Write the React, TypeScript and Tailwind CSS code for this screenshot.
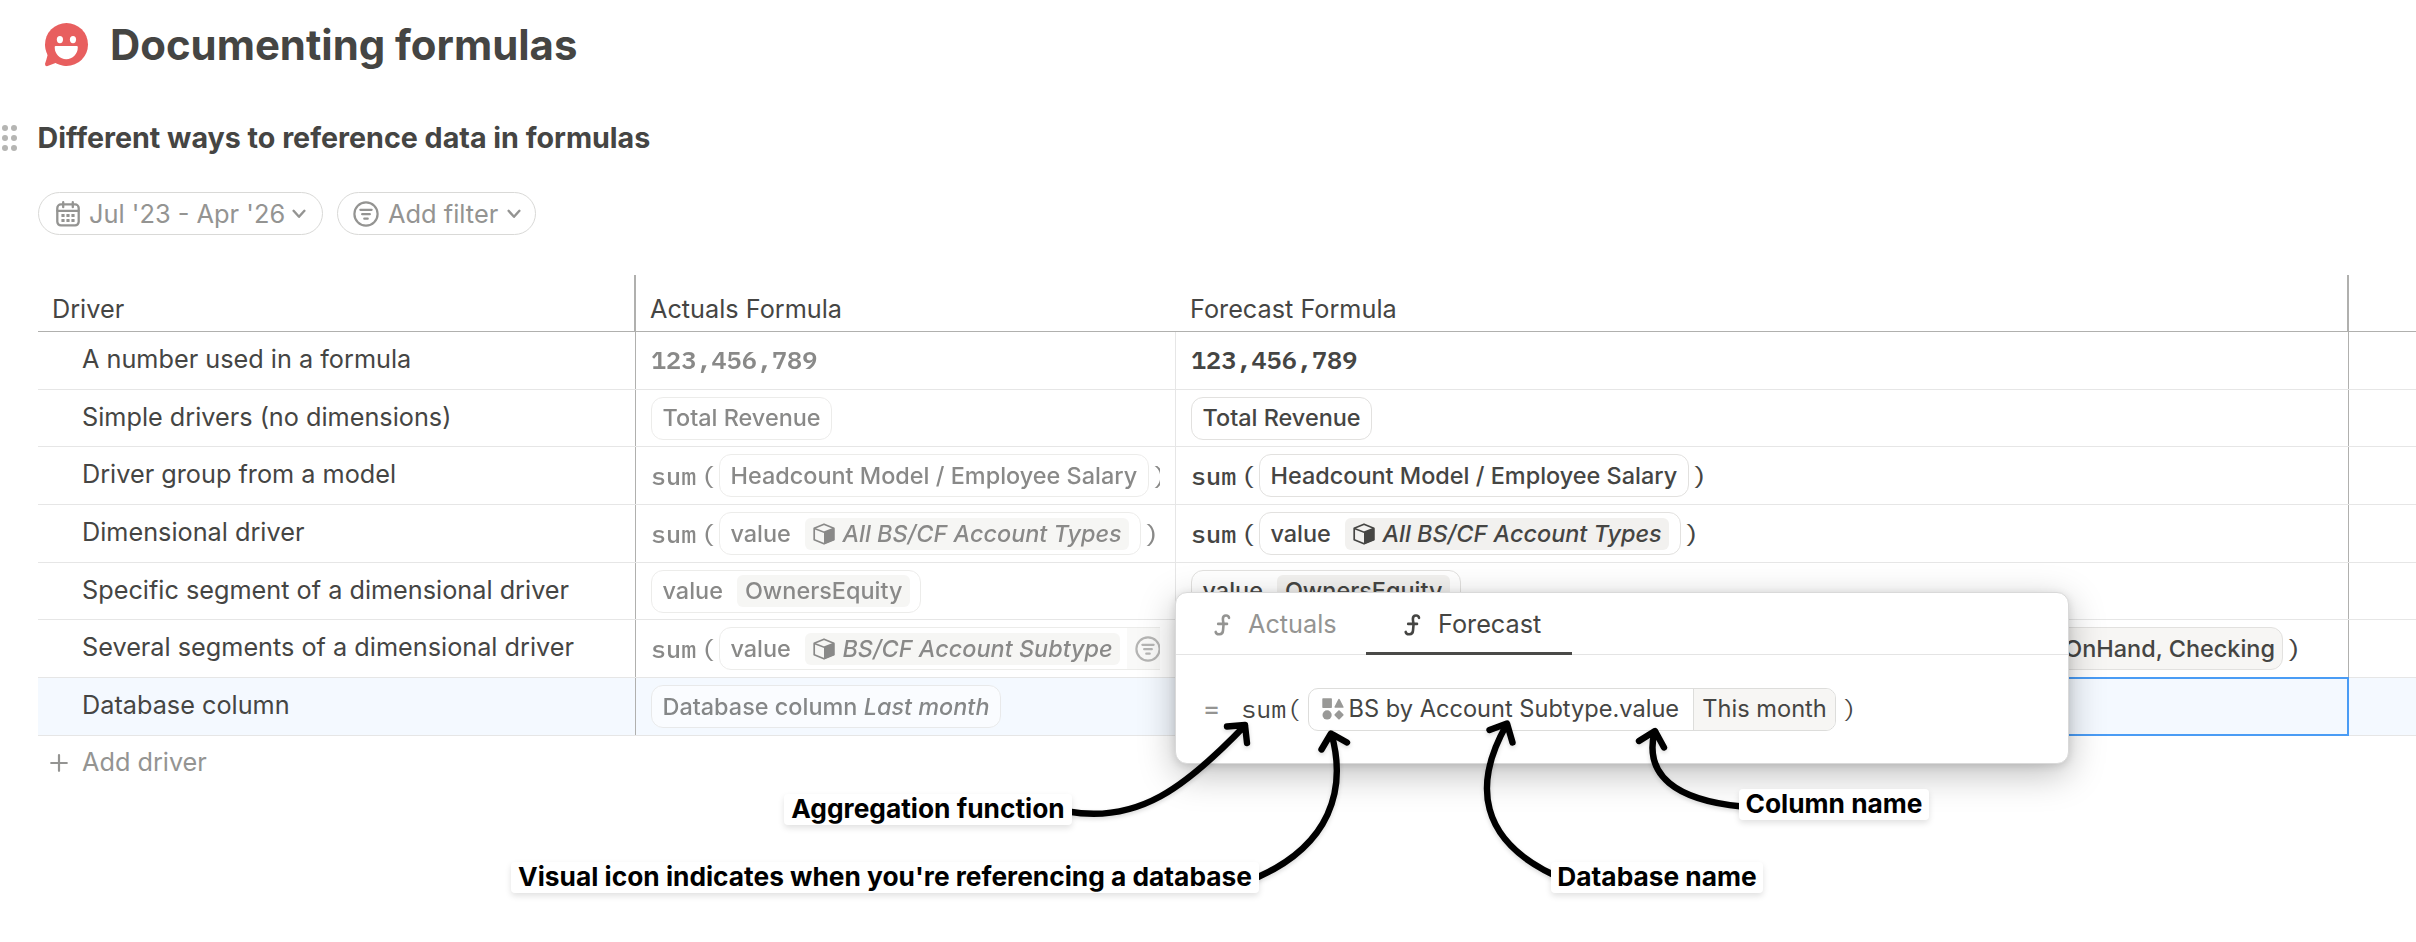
import type { ReactNode } from "react";

const MONO = "font-['IBM_Plex_Mono','Liberation_Mono',monospace] text-[25.2px]";

function ChatSmile() {
  return (
    <svg width="44" height="44" viewBox="0 0 44 44" className="shrink-0">
      <circle cx="21.5" cy="21.5" r="21.5" fill="#e85f5f" />
      <path d="M0 21 L2.6 32 Q1.4 37 0.1 40.6 Q-0.3 43.6 2.6 43.1 L10.5 40 L21 43 L21 21 Z" fill="#e85f5f" />
      <ellipse cx="14.9" cy="16.6" rx="3.1" ry="3.6" fill="#fff" />
      <ellipse cx="28" cy="16.6" rx="3.1" ry="3.6" fill="#fff" />
      <path d="M10.8 22.9 H31.6 Q33 22.9 32.8 24.3 A11.3 11.6 0 0 1 9.7 24.3 Q9.5 22.9 10.8 22.9 Z" fill="#fff" />
    </svg>
  );
}

function Calendar() {
  return (
    <svg width="24" height="26" viewBox="0 0 24 26" fill="none" stroke="currentColor" strokeWidth="2.3" strokeLinecap="round">
      <rect x="1.3" y="3.4" width="21.4" height="21" rx="3.6" />
      <path d="M1.3 9.8H22.7M7.2 1.2V6.2M16.8 1.2V6.2" />
      <g fill="currentColor" stroke="none">
        <rect x="5.4" y="12.9" width="3.2" height="3.2" rx=".6" />
        <rect x="10.4" y="12.9" width="3.2" height="3.2" rx=".6" />
        <rect x="15.4" y="12.9" width="3.2" height="3.2" rx=".6" />
        <rect x="5.4" y="17.9" width="3.2" height="3.2" rx=".6" />
        <rect x="10.4" y="17.9" width="3.2" height="3.2" rx=".6" />
        <rect x="15.4" y="17.9" width="3.2" height="3.2" rx=".6" />
      </g>
    </svg>
  );
}

function FilterCircle({ className = "" }: { className?: string }) {
  return (
    <svg width="26" height="26" viewBox="0 0 26 26" fill="none" stroke="currentColor" strokeWidth="2.2" strokeLinecap="round" className={`shrink-0 ${className}`}>
      <circle cx="13" cy="13" r="11.6" />
      <path d="M7.4 8.8H18.6M9.2 13.2H16.8M11.3 17.7H14.7" strokeWidth="2.3" />
    </svg>
  );
}

function Chevron() {
  return (
    <svg width="14" height="10" viewBox="0 0 14 10" fill="none" stroke="currentColor" strokeWidth="2.4" strokeLinecap="round" strokeLinejoin="round">
      <path d="M1.6 1.8 L7 7.8 L12.4 1.8" />
    </svg>
  );
}

function Cube() {
  return (
    <svg width="22" height="22" viewBox="0 0 22 22" className="shrink-0">
      <path d="M11 1.2 L20.8 5.2 V16.8 L11 20.8 L1.2 16.8 V5.2 Z" fill="none" stroke="currentColor" strokeWidth="1.7" strokeLinejoin="round" />
      <path d="M1.4 5.4 L11 9.2 L20.6 5.4" fill="none" stroke="currentColor" strokeWidth="1.6" />
      <path d="M11 9.2 L21.3 5.3 V17 L11 21.2 Z" fill="currentColor" />
    </svg>
  );
}

function FunctionIcon() {
  return (
    <svg width="17" height="22" viewBox="0 0 17 22" fill="none" stroke="currentColor" strokeWidth="2.6" strokeLinecap="round">
      <path d="M15 3.9 C14.6 .6 9 .4 8.9 4.6 C8.8 7 9.6 8.4 9.5 11 L9 16.6 C8.7 21.4 2.4 21.2 1.7 17.9 M4.2 9.9 H13" />
    </svg>
  );
}

function Shapes() {
  return (
    <svg width="22" height="22" viewBox="0 0 22 22" fill="#999997" stroke="#999997" strokeLinejoin="round" className="shrink-0">
      <rect x="1" y="1" width="8.2" height="8.2" strokeWidth="1.4" />
      <path d="M17 1.6 L20.8 9 H13.2 Z" strokeWidth="1.6" />
      <circle cx="5.1" cy="16.9" r="4.6" stroke="none" />
      <path d="M17 13.2 L20.7 16.9 L17 20.6 L13.3 16.9 Z" strokeWidth="1.8" />
    </svg>
  );
}

function Chip({ children, className = "bg-white px-[10.5px]" }: { children: ReactNode; className?: string }) {
  return (
    <span className={`flex h-[43px] shrink-0 items-center rounded-[12px] border border-[#e2e1df] text-[23.45px] font-medium ${className}`}>
      {children}
    </span>
  );
}

function Tag({ children, icon = false }: { children: ReactNode; icon?: boolean }) {
  return (
    <span className="ml-[14.5px] flex h-8 items-center gap-[7.5px] rounded-[6px] bg-[#f2f1ef] px-[7.5px]">
      {icon && <Cube />}
      {children}
    </span>
  );
}

function Sum({ children }: { children: ReactNode }) {
  return (
    <>
      <span className={`${MONO} font-medium`}>sum</span>
      <span className={`${MONO} ml-[4.5px] font-medium`}>(</span>
      <span className="ml-[3px] flex shrink-0">{children}</span>
      <span className={`${MONO} ml-[3.5px] font-medium`}>)</span>
    </>
  );
}

const number = <span className={`${MONO} pb-px font-semibold`}>123,456,789</span>;
const revenue = <Chip>Total Revenue</Chip>;
const headcount = <Sum><Chip>Headcount Model / Employee Salary</Chip></Sum>;
const allTypes = (
  <Sum>
    <Chip>value<Tag icon><i>All BS/CF Account Types</i></Tag></Chip>
  </Sum>
);
const owners = <Chip>value<Tag>OwnersEquity</Tag></Chip>;

interface Row {
  label: string;
  height: string;
  actuals: ReactNode;
  forecast: ReactNode;
  selected?: boolean;
}

const rows: Row[] = [
  { label: "A number used in a formula", height: "h-[58px]", actuals: number, forecast: number },
  { label: "Simple drivers (no dimensions)", height: "h-[57px]", actuals: revenue, forecast: revenue },
  { label: "Driver group from a model", height: "h-[58px]", actuals: headcount, forecast: headcount },
  { label: "Dimensional driver", height: "h-[58px]", actuals: allTypes, forecast: allTypes },
  { label: "Specific segment of a dimensional driver", height: "h-[57px]", actuals: owners, forecast: owners },
  {
    label: "Several segments of a dimensional driver",
    height: "h-[58px]",
    actuals: (
      <Sum>
        <Chip className="overflow-hidden bg-white pl-[10.5px]">
          value
          <Tag icon><i>BS/CF Account Subtype</i></Tag>
          <span className="ml-[7px] flex h-full w-[200px] items-center bg-[#f7f6f4] pl-[8px]">
            <FilterCircle className="opacity-60" />
          </span>
        </Chip>
      </Sum>
    ),
    forecast: (
      <Sum>
        <Chip className="w-[1024px] justify-end bg-[#f7f6f4] pr-[7px]">OnHand, Checking</Chip>
      </Sum>
    ),
  },
  {
    label: "Database column",
    height: "h-[58px]",
    selected: true,
    actuals: <Chip><span>Database column <i>Last month</i></span></Chip>,
    forecast: null,
  },
];

function Note({ children, className }: { children: ReactNode; className: string }) {
  return (
    <div className={`absolute flex h-[31px] items-center justify-center rounded-[4px] bg-white text-[26.3px] font-bold whitespace-nowrap text-black shadow-[0_3px_6px_rgba(0,0,0,0.12)] ${className}`}>
      {children}
    </div>
  );
}

export default function App() {
  return (
    <div className="relative h-[942px] w-[2416px] overflow-hidden bg-white font-['Inter',sans-serif] text-[25.25px] leading-none font-normal whitespace-nowrap text-[#454543]">
      <header className="flex h-[89px] items-center gap-[21px] pl-[45px]">
        <ChatSmile />
        <h1 className="text-[41.9px] font-bold">Documenting formulas</h1>
      </header>

      <div className="flex h-[98px] items-center gap-[21px] pl-[2px]">
        <div className="grid grid-cols-2 gap-x-[3.5px] gap-y-[4.5px]">
          {[0, 1, 2, 3, 4, 5].map((i) => (
            <span key={i} className="size-[5.5px] rounded-full bg-[#b5b5b3]" />
          ))}
        </div>
        <h2 className="text-[28.65px] font-bold">Different ways to reference data in formulas</h2>
      </div>

      <div className="mt-[5px] flex gap-[14px] pl-[38px] text-[#949492]">
        <div className="flex h-[43px] w-[285px] items-center rounded-full border border-[#d9d9d7] pl-[17px]">
          <Calendar />
          <span className="ml-[9px] w-[196px] text-[25.4px]">Jul '23 - Apr '26</span>
          <span className="ml-[7px]"><Chevron /></span>
        </div>
        <div className="flex h-[43px] w-[199px] items-center rounded-full border border-[#d9d9d7] pl-[15px]">
          <FilterCircle />
          <span className="ml-[9px] w-[111px] text-[25.4px]">Add filter</span>
          <span className="ml-[8px]"><Chevron /></span>
        </div>
      </div>

      <div className="mt-[40px] pl-[38px]">
        <div className="flex h-[57px] border-b border-[#b0b0ae]">
          <div className="flex w-[598px] items-end border-r-2 border-[#b0b0ae] pb-[9px] pl-[14px]">Driver</div>
          <div className="flex w-[540px] items-end pb-[9px] pl-[14px]">Actuals Formula</div>
          <div className="flex w-[1173px] items-end border-r-2 border-[#b0b0ae] pb-[9px] pl-[14px]">Forecast Formula</div>
        </div>
        {rows.map((row) => (
          <div key={row.label} className={`flex border-b border-[#e6e6e6] ${row.height} ${row.selected ? "bg-[#f4f9ff]" : ""}`}>
            <div className="flex w-[598px] items-center border-r border-[#b0b0ae] pb-px pl-[44px]">{row.label}</div>
            <div className="w-[540px] border-r border-[#e6e6e6] pr-[15px] pl-[15px]">
              <div className="flex h-full items-center overflow-hidden opacity-[0.63]">{row.actuals}</div>
            </div>
            <div className="relative flex w-[1173px] items-center border-r border-[#b0b0ae] pl-[15px]">
              {row.forecast}
              {row.selected && <div className="absolute -top-px -right-px -bottom-px -left-px border-2 border-[#4a9cf5]" />}
            </div>
          </div>
        ))}
        <div className="flex h-[54px] items-center text-[#949492]">
          <svg width="18" height="18" viewBox="0 0 18 18" stroke="currentColor" strokeWidth="2.2" strokeLinecap="round" className="ml-[12px]">
            <path d="M9 1.2V16.8M1.2 9H16.8" />
          </svg>
          <span className="ml-[14px]">Add driver</span>
        </div>
      </div>

      <section className="absolute top-[592px] left-[1175px] h-[172px] w-[894px] rounded-[12px] border border-[#d9d9d9] bg-white shadow-[0_10px_36px_rgba(0,0,0,0.26),0_2px_8px_rgba(0,0,0,0.12)]">
        <div className="flex h-[62px] border-b border-[#e4e4e4]">
          <div className="flex w-[190px] items-center pt-[3px] pl-[38px] text-[#949492]">
            <FunctionIcon />
            <span className="ml-[17px]">Actuals</span>
          </div>
          <div className="-mb-px flex w-[206px] items-center border-b-3 border-[#4a4a48] pt-[5px] pl-[38px]">
            <FunctionIcon />
            <span className="ml-[17px]">Forecast</span>
          </div>
        </div>
        <div className="flex h-[108px] items-center">
          <span className={`${MONO} ml-[28px] font-medium text-[#949492]`}>=</span>
          <span className={`${MONO} ml-[22px]`}>sum(</span>
          <span className="ml-[6.5px] flex h-[43px] items-center overflow-hidden rounded-[10px] border border-[#dddddb] text-[23.6px]">
            <span className="flex h-full w-[385px] items-center gap-[5px] border-r border-[#dddddb] pl-[12.5px]">
              <Shapes />
              BS by Account Subtype.value
            </span>
            <span className="flex h-full w-[141px] items-center justify-center bg-[#f7f6f4]">This month</span>
          </span>
          <span className={`${MONO} ml-[6px]`}>)</span>
        </div>
      </section>

      <svg
        width="2416"
        height="942"
        viewBox="0 0 2416 942"
        className="pointer-events-none absolute top-0 left-0 drop-shadow-[0_2px_2px_rgba(0,0,0,0.15)]"
        fill="none"
        stroke="#000"
        strokeWidth="6.4"
        strokeLinecap="round"
        strokeLinejoin="round"
      >
        <path d="M1068 811.5 C1138 824 1186 787 1245 725.5 M1227 726.5 L1245 725 L1247 743" />
        <path d="M1257 877.5 C1330 845 1347 790 1331.5 734 M1321.5 749.5 L1331 733.5 L1347 742.5" />
        <path d="M1554 875 C1480 840 1472 785 1507 724 M1489.5 730 L1507 723.5 L1512.5 742.5" />
        <path d="M1742 806.5 C1675 800 1644 775 1654.5 732 M1639 741 L1655 731 L1664 747.5" />
      </svg>
      <Note className="top-[794px] left-[784px] w-[288px]">Aggregation function</Note>
      <Note className="top-[862px] left-[511px] w-[748px]">Visual icon indicates when you're referencing a database</Note>
      <Note className="top-[789px] left-[1739px] w-[190px]">Column name</Note>
      <Note className="top-[862px] left-[1551px] w-[212px]">Database name</Note>
    </div>
  );
}
